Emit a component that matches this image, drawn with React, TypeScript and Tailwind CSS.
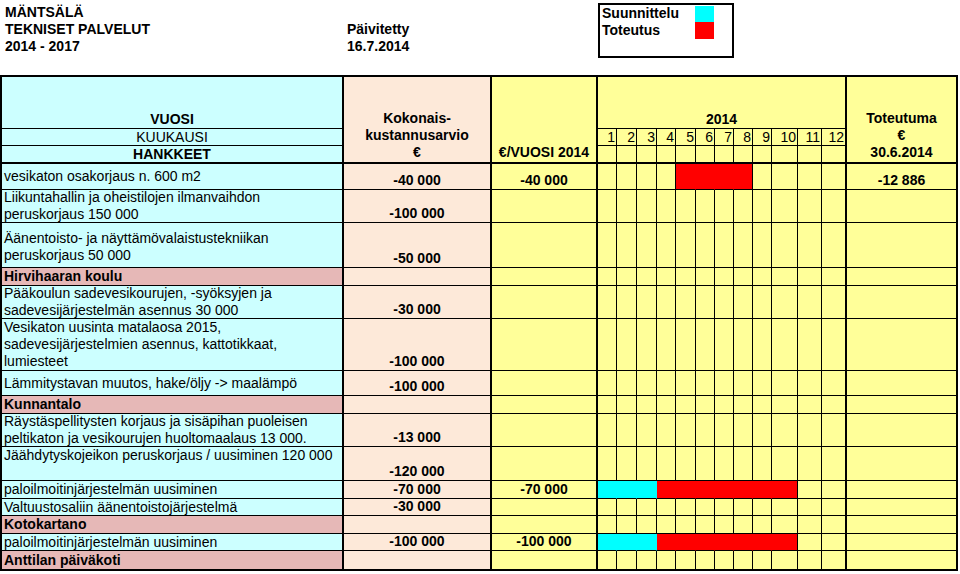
import React from "react";

type Row = {
  text: string[];
  section?: boolean;
  align?: string;
  total?: string;
  year?: string;
  done14?: string;
  plan?: number[];
  real?: number[];
};

const rows: Row[] = [
  { text: ["vesikaton osakorjaus n. 600 m2"], total: "-40 000", year: "-40 000", real: [5, 6, 7, 8], done14: "-12 886" },
  { text: ["Liikuntahallin ja oheistilojen ilmanvaihdon", "peruskorjaus 150 000"], total: "-100 000" },
  { text: ["Äänentoisto- ja näyttämövalaistustekniikan", "peruskorjaus 50 000"], total: "-50 000", align: "justify-end pb-[3px]" },
  { text: ["Hirvihaaran koulu"], section: true },
  { text: ["Pääkoulun sadevesikourujen, -syöksyjen ja", "sadevesijärjestelmän asennus 30 000"], total: "-30 000" },
  { text: ["Vesikaton uusinta matalaosa 2015,", "sadevesijärjestelmien asennus, kattotikkaat,", "lumiesteet"], total: "-100 000" },
  { text: ["Lämmitystavan muutos, hake/öljy -> maalämpö"], total: "-100 000" },
  { text: ["Kunnantalo"], section: true },
  { text: ["Räystäspellitysten korjaus ja sisäpihan puoleisen", "peltikaton ja vesikourujen huoltomaalaus 13 000."], total: "-13 000" },
  { text: ["Jäähdytyskojeikon peruskorjaus / uusiminen 120 000"], total: "-120 000", align: "justify-start" },
  { text: ["paloilmoitinjärjestelmän uusiminen"], total: "-70 000", year: "-70 000", plan: [1, 2, 3], real: [4, 5, 6, 7, 8, 9, 10] },
  { text: ["Valtuustosaliin äänentoistojärjestelmä"], total: "-30 000" },
  { text: ["Kotokartano"], section: true },
  { text: ["paloilmoitinjärjestelmän uusiminen"], total: "-100 000", year: "-100 000", plan: [1, 2, 3], real: [4, 5, 6, 7, 8, 9, 10] },
  { text: ["Anttilan päiväkoti"], section: true },
];

const months = [1, 2, 3, 4, 5, 6, 7, 8, 9, 10, 11, 12];

function tone(r: Row, m: number) {
  if (r.plan?.includes(m)) return "c";
  if (r.real?.includes(m)) return "r";
  return "";
}

function monthClass(r: Row, m: number, last: boolean) {
  const t = tone(r, m);
  const bg = t === "c" ? "bg-[#00ffff]" : t === "r" ? "bg-[#ff0000]" : "bg-[#ffff99]";
  let right = "border-r border-r-black";
  if (m === 12) right = "border-r-2 border-r-black";
  else if (t && tone(r, m + 1)) right = t === "c" ? "border-r border-r-[#00ffff]" : "border-r border-r-[#ff0000]";
  return `${bg} ${right} ${last ? "" : "border-b border-b-black"}`;
}

export default function App() {
  return (
    <div className="w-[960px] h-[574px] bg-white text-black text-[14px] leading-[17px] font-['Liberation_Sans',Arial,sans-serif] overflow-hidden">
      {/* page header */}
      <div className="flex h-[75px]">
        <div className="w-[347px] pl-[5px] pt-[4px] font-bold">
          <div>MÄNTSÄLÄ</div>
          <div>TEKNISET PALVELUT</div>
          <div>2014 - 2017</div>
        </div>
        <div className="w-[251px] pt-[21px] font-bold">
          <div>Päivitetty</div>
          <div>16.7.2014</div>
        </div>
        <div className="mt-[3px] h-[55px] w-[136px] border-2 border-black font-bold">
          <div className="flex h-[17px]">
            <span className="w-[95px] pl-[2px]">Suunnittelu</span>
            <span className="mt-[1px] h-[16px] w-[19px] bg-[#00ffff]" />
          </div>
          <div className="flex h-[17px]">
            <span className="w-[95px] pl-[2px]">Toteutus</span>
            <span className="h-[17px] w-[19px] bg-[#ff0000]" />
          </div>
        </div>
      </div>

      {/* table */}
      <div className="w-[958px] border-2 border-black">
        <div className="grid grid-cols-[342px_148px_106px_19px_20px_20px_19px_20px_19px_19px_19px_19px_26px_24px_25px_109px] grid-rows-[52px_17px_18px_26px_33px_45px_18px_33px_52px_25px_18px_33px_34px_18px_17px_18px_17px_18px]">
          {/* header row 1 */}
          <div className="flex items-end justify-center bg-[#ccffff] border-r-2 border-b border-black font-bold">VUOSI</div>
          <div className="row-span-3 flex flex-col items-center justify-end bg-[#fde9d9] border-r-2 border-b-2 border-black font-bold pb-[1px]">
            <div>Kokonais-</div>
            <div>kustannusarvio</div>
            <div>€</div>
          </div>
          <div className="row-span-3 flex items-end justify-center bg-[#ffff99] border-r-2 border-b-2 border-black font-bold pb-[1px]">
            €/VUOSI 2014
          </div>
          <div className="col-span-12 flex items-end justify-center bg-[#ffff99] border-r-2 border-b border-black font-bold">2014</div>
          <div className="row-span-3 flex flex-col items-center justify-end bg-[#ffff99] border-b-2 border-black font-bold pb-[1px]">
            <div>Toteutuma</div>
            <div>€</div>
            <div>30.6.2014</div>
          </div>

          {/* header row 2 */}
          <div className="flex items-center justify-center bg-[#ccffff] border-r-2 border-b border-black">KUUKAUSI</div>
          {months.map((m) => (
            <div
              key={"n" + m}
              className={`flex items-center justify-end pr-[1px] bg-[#ffff99] border-b border-black ${m === 12 ? "border-r-2" : "border-r"}`}
            >
              {m}
            </div>
          ))}

          {/* header row 3 */}
          <div className="flex items-center justify-center bg-[#ccffff] border-r-2 border-b-2 border-black font-bold">HANKKEET</div>
          {months.map((m) => (
            <div key={"e" + m} className={`bg-[#ffff99] border-b-2 border-black ${m === 12 ? "border-r-2" : "border-r"}`} />
          ))}

          {/* body */}
          {rows.map((r, i) => {
            const last = i === rows.length - 1;
            const bb = last ? "" : "border-b";
            return (
              <React.Fragment key={i}>
                <div
                  className={`flex flex-col pl-[2px] border-r-2 border-black ${bb} ${r.align ?? "justify-center"} ${
                    r.section ? "bg-[#e6b8b7] font-bold" : "bg-[#ccffff]"
                  }`}
                >
                  {r.text.map((t, j) => (
                    <div key={j} className="whitespace-nowrap">
                      {t}
                    </div>
                  ))}
                </div>
                <div className={`flex items-end justify-center bg-[#fde9d9] border-r-2 border-black font-bold ${bb}`}>{r.total}</div>
                <div className={`flex items-end justify-center bg-[#ffff99] border-r-2 border-black font-bold ${bb}`}>{r.year}</div>
                {months.map((m) => (
                  <div key={m} className={monthClass(r, m, last)} />
                ))}
                <div className={`flex items-end justify-center bg-[#ffff99] border-black font-bold ${bb}`}>{r.done14}</div>
              </React.Fragment>
            );
          })}
        </div>
      </div>
    </div>
  );
}
